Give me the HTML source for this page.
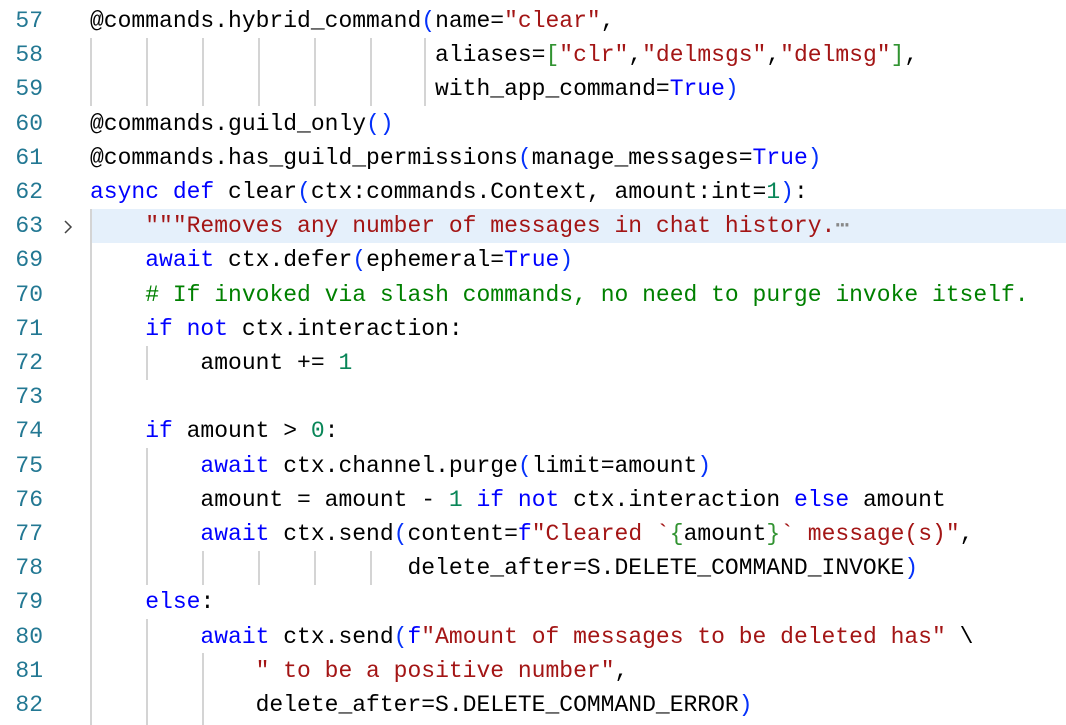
<!DOCTYPE html>
<html><head><meta charset="utf-8"><style>
body{margin:0;background:#fff;width:1066px;height:725px;overflow:hidden;position:relative;font-family:"Liberation Mono",monospace;font-size:23px}
.l{position:absolute;left:0;height:34.2px;line-height:34.2px;width:1066px;white-space:pre}
.n{position:absolute;left:0;width:43px;text-align:right;color:#237893}
.c{position:absolute;left:90px;color:#000}
.k{color:#0000ff}.s{color:#a31515}.m{color:#098658}.g{color:#008000}.b{color:#0431fa}.q{color:#319331}
.hl{background:#e5f0fb}
.gd{position:absolute;width:1.5px;background:#d4d4d4}
.arrow{position:absolute;left:63px;top:11px}
</style></head><body>
<div class="l" style="top:4px"><span class="n">57</span><span class="c">@commands.hybrid_command<span class="b">(</span>name=<span class="s">"clear"</span>,</span></div>
<div class="l" style="top:38.2px"><span class="n">58</span><span class="c">                         aliases=<span class="q">[</span><span class="s">"clr"</span>,<span class="s">"delmsgs"</span>,<span class="s">"delmsg"</span><span class="q">]</span>,</span></div>
<div class="l" style="top:72.4px"><span class="n">59</span><span class="c">                         with_app_command=<span class="k">True</span><span class="b">)</span></span></div>
<div class="l" style="top:106.6px"><span class="n">60</span><span class="c">@commands.guild_only<span class="b">()</span></span></div>
<div class="l" style="top:140.8px"><span class="n">61</span><span class="c">@commands.has_guild_permissions<span class="b">(</span>manage_messages=<span class="k">True</span><span class="b">)</span></span></div>
<div class="l" style="top:175px"><span class="n">62</span><span class="c"><span class="k">async def</span> clear<span class="b">(</span>ctx:commands.Context, amount:int=<span class="m">1</span><span class="b">)</span>:</span></div>
<div class="l hl" style="top:209.2px;left:90px;width:976px"></div>
<div class="l" style="top:209.2px"><span class="n">63</span><svg class="arrow" width="10" height="14" viewBox="0 0 10 14"><path d="M2 1 L8 7 L2 13" fill="none" stroke="#444" stroke-width="1.5"/></svg><span class="c">    <span class="s">"""Removes any number of messages in chat history.</span><span style="color:#888">⋯</span></span></div>
<div class="l" style="top:243.4px"><span class="n">69</span><span class="c">    <span class="k">await</span> ctx.defer<span class="b">(</span>ephemeral=<span class="k">True</span><span class="b">)</span></span></div>
<div class="l" style="top:277.6px"><span class="n">70</span><span class="c">    <span class="g"># If invoked via slash commands, no need to purge invoke itself.</span></span></div>
<div class="l" style="top:311.8px"><span class="n">71</span><span class="c">    <span class="k">if not</span> ctx.interaction:</span></div>
<div class="l" style="top:346px"><span class="n">72</span><span class="c">        amount += <span class="m">1</span></span></div>
<div class="l" style="top:380.2px"><span class="n">73</span></div>
<div class="l" style="top:414.4px"><span class="n">74</span><span class="c">    <span class="k">if</span> amount &gt; <span class="m">0</span>:</span></div>
<div class="l" style="top:448.6px"><span class="n">75</span><span class="c">        <span class="k">await</span> ctx.channel.purge<span class="b">(</span>limit=amount<span class="b">)</span></span></div>
<div class="l" style="top:482.8px"><span class="n">76</span><span class="c">        amount = amount - <span class="m">1</span> <span class="k">if not</span> ctx.interaction <span class="k">else</span> amount</span></div>
<div class="l" style="top:517px"><span class="n">77</span><span class="c">        <span class="k">await</span> ctx.send<span class="b">(</span>content=<span class="k">f</span><span class="s">"Cleared `</span><span class="q">{</span>amount<span class="q">}</span><span class="s">` message(s)"</span>,</span></div>
<div class="l" style="top:551.2px"><span class="n">78</span><span class="c">                       delete_after=S.DELETE_COMMAND_INVOKE<span class="b">)</span></span></div>
<div class="l" style="top:585.4px"><span class="n">79</span><span class="c">    <span class="k">else</span>:</span></div>
<div class="l" style="top:619.6px"><span class="n">80</span><span class="c">        <span class="k">await</span> ctx.send<span class="b">(</span><span class="k">f</span><span class="s">"Amount of messages to be deleted has"</span> \</span></div>
<div class="l" style="top:653.8px"><span class="n">81</span><span class="c">            <span class="s">" to be a positive number"</span>,</span></div>
<div class="l" style="top:688px"><span class="n">82</span><span class="c">            delete_after=S.DELETE_COMMAND_ERROR<span class="b">)</span></span></div>
<div class="gd" style="left:90px;top:38px;height:68px"></div>
<div class="gd" style="left:146px;top:38px;height:68px"></div>
<div class="gd" style="left:202px;top:38px;height:68px"></div>
<div class="gd" style="left:258px;top:38px;height:68px"></div>
<div class="gd" style="left:314px;top:38px;height:68px"></div>
<div class="gd" style="left:370px;top:38px;height:68px"></div>
<div class="gd" style="left:424px;top:38px;height:68px"></div>
<div class="gd" style="left:90px;top:209px;height:516px"></div>
<div class="gd" style="left:146px;top:346px;height:34px"></div>
<div class="gd" style="left:146px;top:448px;height:137px"></div>
<div class="gd" style="left:202px;top:551px;height:34px"></div>
<div class="gd" style="left:258px;top:551px;height:34px"></div>
<div class="gd" style="left:314px;top:551px;height:34px"></div>
<div class="gd" style="left:370px;top:551px;height:34px"></div>
<div class="gd" style="left:146px;top:619px;height:106px"></div>
<div class="gd" style="left:202px;top:653px;height:72px"></div>
</body></html>
